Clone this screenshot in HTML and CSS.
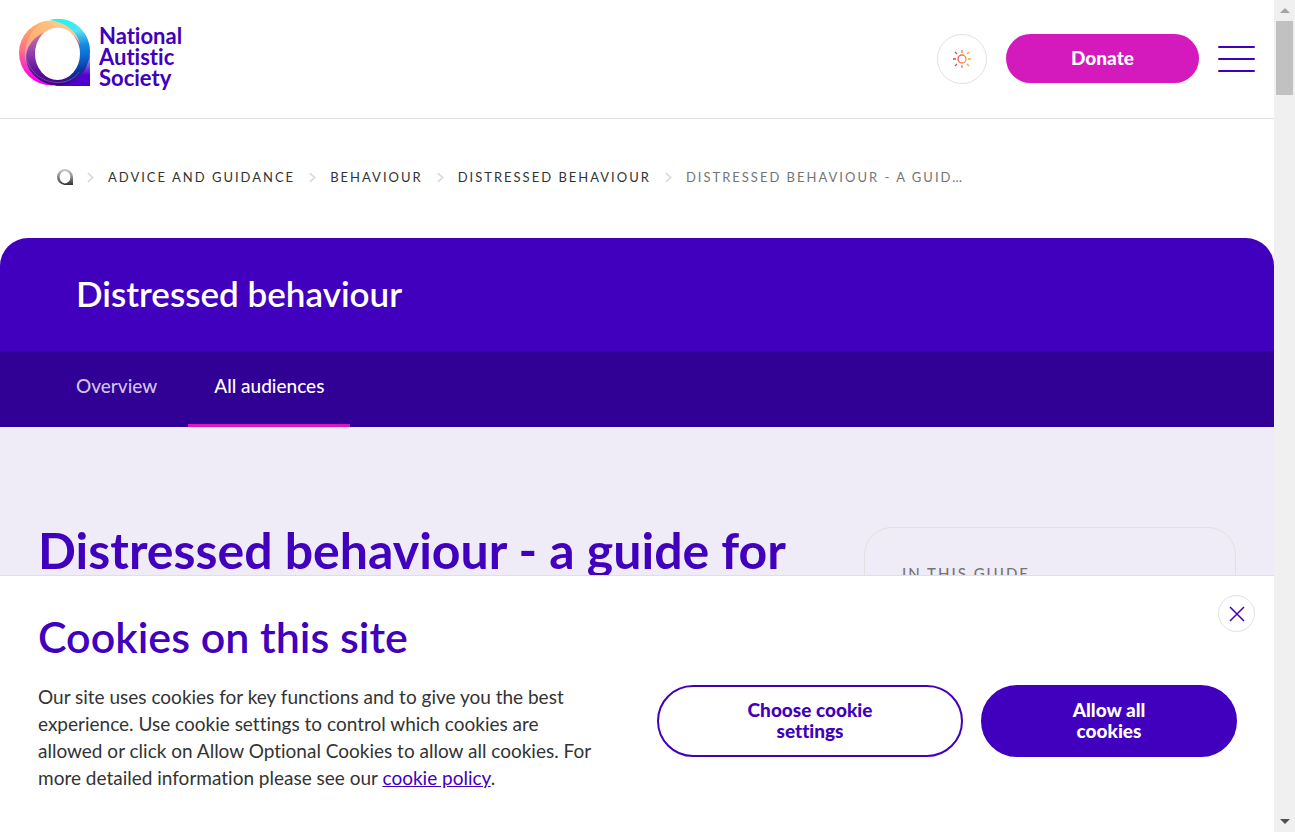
FILE: index.html
```html
<!DOCTYPE html>
<html lang="en">
<head>
<meta charset="utf-8">
<meta name="viewport" content="width=device-width, initial-scale=1">
<title>Distressed behaviour - a guide for all audiences</title>
<link rel="stylesheet" href="styles.css">
</head>
<body>
<div class="page">
  <header class="site-header">
    <a class="logo" href="#" aria-label="National Autistic Society">
      <svg class="logo-mark" viewBox="0 0 71 67" aria-hidden="true">
        <defs>
          <linearGradient id="warm" x1="0.6" y1="0" x2="0.3" y2="1">
            <stop offset="0" stop-color="#ffc76e"/><stop offset="0.3" stop-color="#ff9a6c"/><stop offset="0.6" stop-color="#ff6a8c"/><stop offset="0.95" stop-color="#ff00ea"/>
          </linearGradient>
          <linearGradient id="cool" gradientUnits="userSpaceOnUse" x1="48" y1="0" x2="58" y2="66">
            <stop offset="0" stop-color="#1ff5ef"/><stop offset="0.2" stop-color="#5ae0f4"/><stop offset="0.42" stop-color="#1689e2"/><stop offset="0.6" stop-color="#0f66d0"/><stop offset="0.82" stop-color="#06309c"/><stop offset="1" stop-color="#2b1598"/>
          </linearGradient>
          <linearGradient id="corner" x1="0" y1="0" x2="0" y2="1">
            <stop offset="0.2" stop-color="#8d7be8"/><stop offset="0.65" stop-color="#5200d6"/><stop offset="1" stop-color="#4a00cc"/>
          </linearGradient>
          <linearGradient id="peach" gradientUnits="userSpaceOnUse" x1="36" y1="2" x2="26" y2="66">
            <stop offset="0" stop-color="#ffc67c"/><stop offset="0.3" stop-color="#ffb078"/><stop offset="0.6" stop-color="#ff8aa8"/><stop offset="1" stop-color="#e45ac8"/>
          </linearGradient>
          <linearGradient id="plum" x1="0" y1="0" x2="0" y2="1">
            <stop offset="0" stop-color="#d07c95"/><stop offset="0.35" stop-color="#9b49ae"/><stop offset="0.7" stop-color="#61169f"/><stop offset="1" stop-color="#3b0087"/>
          </linearGradient>
          <clipPath id="cool-clip"><circle cx="38.500" cy="33.500" r="33"/></clipPath>
        </defs>
        <circle cx="32.500" cy="34" r="32.500" fill="url(#warm)"/>
        <path d="M71 36V67H36L50 52Z" fill="url(#corner)"/>
        <g clip-path="url(#cool-clip)">
          <ellipse cx="34" cy="34.500" rx="28" ry="32.500" fill="url(#peach)"/>
          <ellipse cx="38" cy="39" rx="31" ry="28" fill="url(#plum)"/>
        </g>
        <path d="M30 1C52-5 71 12 71 32C71 48 60 61 40 65C52 58 61 50 61 34C62 14 46 3 30 1Z" fill="url(#cool)"/>
        <path d="M28 2C44 2 57 10 61 25C55 14 47 9 38 8Z" fill="#ffc98a"/>
        <path d="M7 37C9 51 22 63 38 63.500C48 63.500 55 60 60 53" fill="none" stroke="#9a78cc" stroke-width=".5"/>
        <ellipse cx="38.500" cy="34.800" rx="22.500" ry="26.200" fill="#fff"/>
      </svg>
      <span class="logo-text">National<br>Autistic<br>Society</span>
    </a>
    <div class="header-actions">
      <button class="round-button theme-button" type="button" aria-label="Change theme">
        <svg width="20" height="20" viewBox="0 0 20 20" fill="none" stroke="url(#sun)" stroke-width="1.300" aria-hidden="true">
          <defs><linearGradient id="sun" gradientUnits="userSpaceOnUse" x1="1" y1="0" x2="19" y2="0"><stop offset="0" stop-color="#e5296b"/><stop offset=".5" stop-color="#f77846"/><stop offset="1" stop-color="#fbbd25"/></linearGradient></defs>
          <circle cx="10" cy="10" r="4"/>
          <path d="M10 1V4M10 16V19M1 10H4M16 10H19M3 3L5 5M15 15L17 17M3 17L5 15M15 5L17 3"/>
        </svg>
      </button>
      <a class="donate" href="#">Donate</a>
      <button class="menu-button" type="button" aria-label="Menu"><span></span><span></span><span></span></button>
    </div>
  </header>

  <nav class="breadcrumbs" aria-label="Breadcrumb">
    <a class="home" href="#" aria-label="Home">
      <svg width="17" height="16" viewBox="0 0 17 16" aria-hidden="true">
        <defs><linearGradient id="grey" x1="0" y1="0" x2="0" y2="1"><stop offset="0" stop-color="#ccc"/><stop offset=".5" stop-color="#888"/><stop offset="1" stop-color="#333"/></linearGradient></defs>
        <path fill="url(#grey)" fill-rule="evenodd" d="M17 8V16H8.500A8 8 0 1 1 17 8ZM9 2A5.300 6.200 0 1 0 9 14.400A5.300 6.200 0 1 0 9 2Z"/>
      </svg>
    </a>
    <svg class="chevron" viewBox="0 0 8 12" aria-hidden="true"><path d="M1 1L6.500 6L1 11"/></svg>
    <a href="#">Advice and guidance</a>
    <svg class="chevron" viewBox="0 0 8 12" aria-hidden="true"><path d="M1 1L6.500 6L1 11"/></svg>
    <a href="#">Behaviour</a>
    <svg class="chevron" viewBox="0 0 8 12" aria-hidden="true"><path d="M1 1L6.500 6L1 11"/></svg>
    <a href="#">Distressed behaviour</a>
    <svg class="chevron" viewBox="0 0 8 12" aria-hidden="true"><path d="M1 1L6.500 6L1 11"/></svg>
    <span class="current" aria-current="page">Distressed behaviour - a guid…</span>
  </nav>

  <section class="guide-banner">
    <p class="guide-title">Distressed behaviour</p>
    <nav class="tabs" aria-label="Guide sections">
      <a class="tab" href="#">Overview</a>
      <a class="tab active" href="#" aria-current="page">All audiences</a>
    </nav>
  </section>

  <main class="content">
    <h1>Distressed behaviour - a guide for</h1>
    <aside class="guide-index"><h2>In this guide</h2></aside>
  </main>

  <section class="cookie-banner" aria-labelledby="cookie-title">
    <button class="round-button close-button" type="button" aria-label="Close">
      <svg width="16" height="16" viewBox="0 0 16 16" fill="none" stroke="#4100bd" stroke-width="1.500" aria-hidden="true"><path d="M1 1L15 15M15 1L1 15"/></svg>
    </button>
    <h2 id="cookie-title">Cookies on this site</h2>
    <div class="cookie-row">
      <p>Our site uses cookies for key functions and to give you the best experience. Use cookie settings to control which cookies are allowed or click on Allow Optional Cookies to allow all cookies. For more detailed information please see our <a href="#">cookie policy</a>.</p>
      <div class="cookie-actions">
        <button class="pill outline" type="button">Choose cookie<br>settings</button>
        <button class="pill solid" type="button">Allow all<br>cookies</button>
      </div>
    </div>
  </section>
</div>
<div class="scrollbar" aria-hidden="true">
  <span class="arrow up"></span>
  <span class="thumb"></span>
  <span class="arrow down"></span>
</div>
</body>
</html>
```
FILE: styles.css
```css
:root {
  --purple: #4100bd;
  --dark-purple: #310094;
  --pink: #d41abd;
  --lavender: #f0ecf7;
  --line: #e0e0e0;
}

* { box-sizing: border-box; }

body {
  margin: 0;
  height: 100vh;
  display: flex;
  overflow: hidden;
  background: #fff;
  color: #333;
  font-family: Lato, "Noto Sans", sans-serif;
  font-variant-ligatures: none;
}

h1, h2, p { margin: 0; }
button {
  padding: 0;
  font-family: inherit;
  font-variant-ligatures: none;
  cursor: pointer;
}
svg { display: block; }

.page {
  position: relative;
  flex: 1;
  min-width: 0;
  display: flex;
  flex-direction: column;
}

.site-header {
  display: flex;
  justify-content: space-between;
  align-items: flex-start;
  padding: 19px 19px 30px;
  border-bottom: 1px solid var(--line);
}

.logo {
  display: flex;
  gap: 9px;
  color: var(--purple);
  text-decoration: none;
}
.logo-mark { width: 71px; height: 67px; }
.logo-text {
  padding-top: 6px;
  font-size: 22px;
  line-height: 21px;
  font-weight: 700;
}

.header-actions {
  display: flex;
  align-items: flex-start;
  gap: 19px;
  padding-top: 15px;
}

.round-button {
  display: grid;
  place-items: center;
  background: #fff;
  border: 1px solid var(--line);
  border-radius: 50%;
}
.theme-button { width: 50px; height: 50px; }

.donate {
  width: 193px;
  height: 49px;
  border-radius: 25px;
  background: var(--pink);
  color: #fff;
  font-size: 19px;
  line-height: 48px;
  font-weight: 900;
  text-align: center;
  text-decoration: none;
}

.menu-button {
  display: flex;
  flex-direction: column;
  justify-content: center;
  gap: 10px;
  width: 37px;
  height: 50px;
  border: 0;
  background: none;
}
.menu-button span {
  width: 100%;
  height: 2px;
  border-radius: 1px;
  background: var(--purple);
}

.breadcrumbs {
  display: flex;
  align-items: center;
  gap: 14px;
  padding: 48px 56px 51px;
  font-size: 13px;
  line-height: 20px;
  letter-spacing: 2px;
  text-transform: uppercase;
  white-space: nowrap;
}
.breadcrumbs a { color: #333; text-decoration: none; }
.breadcrumbs .current { color: #757575; }
.chevron {
  width: 7px;
  height: 13px;
  fill: none;
  stroke: #dcdcdc;
  stroke-width: 2;
}

.guide-banner {
  border-radius: 28px 28px 0 0;
  background: var(--purple);
  color: #fff;
  overflow: hidden;
}
.guide-title {
  padding: 31px 76px 34px;
  font-size: 35px;
  line-height: 48px;
  font-weight: 600;
}
.tabs {
  display: flex;
  gap: 5px;
  padding: 0 50px;
  background: var(--dark-purple);
}
.tab {
  padding: 22px 26px 25px;
  border-bottom: 3px solid transparent;
  color: #d0c4e8;
  font-size: 19px;
  line-height: 26px;
  font-weight: 500;
  text-decoration: none;
}
.tab.active { color: #fff; border-color: var(--pink); }

.content {
  flex: 1;
  display: flex;
  justify-content: space-between;
  padding: 100px 38px 0;
  background: var(--lavender);
}
.content h1 {
  color: var(--purple);
  font-size: 50px;
  line-height: 46px;
  font-weight: 700;
}
.guide-index {
  width: 372px;
  padding: 35px 37px;
  border: 1px solid var(--line);
  border-radius: 28px;
}
.guide-index h2 {
  color: #757575;
  font-size: 15px;
  line-height: 20px;
  font-weight: 500;
  letter-spacing: 2px;
  text-transform: uppercase;
}

.cookie-banner {
  position: absolute;
  left: 0;
  right: 0;
  bottom: 0;
  padding: 35px 37px 41px 38px;
  border-top: 1px solid var(--line);
  background: #fff;
}
.cookie-banner h2 {
  color: var(--purple);
  font-size: 43px;
  line-height: 52px;
  font-weight: 600;
}
.close-button {
  position: absolute;
  top: 19px;
  right: 19px;
  width: 37px;
  height: 37px;
}
.cookie-row {
  display: flex;
  justify-content: space-between;
  align-items: flex-start;
  padding-top: 20px;
}
.cookie-row p {
  width: 568px;
  font-size: 19px;
  line-height: 27px;
}
.cookie-row p a { color: var(--purple); }
.cookie-actions { display: flex; gap: 18px; padding-top: 2px; }
.pill {
  height: 72px;
  padding-bottom: 2px;
  border: 2px solid var(--purple);
  border-radius: 36px;
  font-size: 19px;
  line-height: 21px;
  font-weight: 900;
}
.outline { width: 306px; background: #fff; color: var(--purple); }
.solid { width: 256px; background: var(--purple); color: #fff; }

.scrollbar {
  width: 21px;
  display: flex;
  flex-direction: column;
  align-items: center;
  padding: 8px 0;
  background: #f0f0f0;
}
.arrow { border: 5px solid transparent; }
.up { border-top: 0; border-bottom-color: #a3a3a3; }
.down { margin-top: auto; border-bottom: 0; border-top-color: #505050; }
.thumb { width: 17px; height: 74px; margin-top: 8px; background: #c1c1c1; }
```
